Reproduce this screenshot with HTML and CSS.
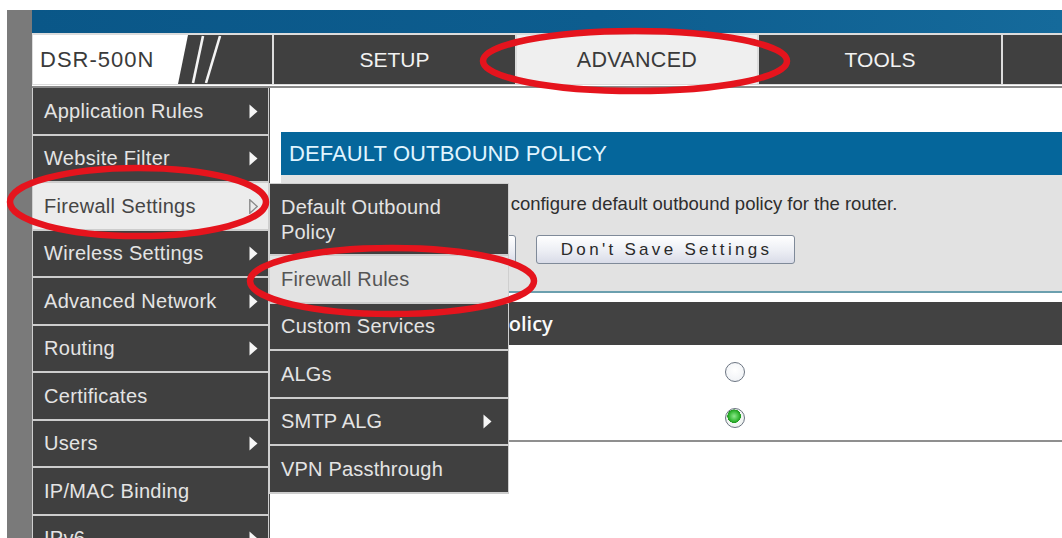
FILE: index.html
```html
<!DOCTYPE html>
<html lang="en">
<head>
<meta charset="utf-8">
<title>DSR-500N — Default Outbound Policy</title>
<link rel="stylesheet" href="styles.css">
</head>
<body>
<div class="frame">
  <div class="rail"></div>
  <div class="main">
    <div class="topbar"></div>
    <nav class="tabs">
      <div class="logo">
        <span class="logo-text">DSR-500N</span>
        <svg class="logo-mark" viewBox="0 0 100 49" width="100" height="49" aria-hidden="true">
          <polygon points="16,0 100,0 100,49 6,49" fill="#404040"/>
          <line x1="31" y1="1" x2="21" y2="48" stroke="#f4f4f4" stroke-width="2.6"/>
          <line x1="48" y1="1" x2="34" y2="48" stroke="#f4f4f4" stroke-width="2.6"/>
        </svg>
      </div>
      <div class="tab">SETUP</div>
      <div class="tab active">ADVANCED</div>
      <div class="tab">TOOLS</div>
      <div class="tab"></div>
    </nav>
    <div class="rule"></div>
    <div class="workspace">
      <ul class="sidemenu">
        <li class="item">Application Rules<svg class="arr" viewBox="0 0 9 15"><path d="M0.5 0.5 L8.5 7.5 L0.5 14.5Z"/></svg></li>
        <li class="item">Website Filter<svg class="arr" viewBox="0 0 9 15"><path d="M0.5 0.5 L8.5 7.5 L0.5 14.5Z"/></svg></li>
        <li class="item current">Firewall Settings<svg class="arr open" viewBox="0 0 9 15"><path d="M0.8 0.8 L8.2 7.5 L0.8 14.2Z"/></svg>
          <ul class="flyout">
            <li class="fly-item">Default Outbound Policy</li>
            <li class="fly-item current">Firewall Rules</li>
            <li class="fly-item">Custom Services</li>
            <li class="fly-item">ALGs</li>
            <li class="fly-item">SMTP ALG<svg class="arr" viewBox="0 0 9 15"><path d="M0.5 0.5 L8.5 7.5 L0.5 14.5Z"/></svg></li>
            <li class="fly-item">VPN Passthrough</li>
          </ul>
        </li>
        <li class="item">Wireless Settings<svg class="arr" viewBox="0 0 9 15"><path d="M0.5 0.5 L8.5 7.5 L0.5 14.5Z"/></svg></li>
        <li class="item">Advanced Network<svg class="arr" viewBox="0 0 9 15"><path d="M0.5 0.5 L8.5 7.5 L0.5 14.5Z"/></svg></li>
        <li class="item">Routing<svg class="arr" viewBox="0 0 9 15"><path d="M0.5 0.5 L8.5 7.5 L0.5 14.5Z"/></svg></li>
        <li class="item">Certificates</li>
        <li class="item">Users<svg class="arr" viewBox="0 0 9 15"><path d="M0.5 0.5 L8.5 7.5 L0.5 14.5Z"/></svg></li>
        <li class="item">IP/MAC Binding</li>
        <li class="item">IPv6<svg class="arr" viewBox="0 0 9 15"><path d="M0.5 0.5 L8.5 7.5 L0.5 14.5Z"/></svg></li>
      </ul>

      <section class="content">
        <div class="panel">
          <h2 class="panel-title">DEFAULT OUTBOUND POLICY</h2>
          <div class="panel-body">
            <p class="intro">This page allows user to configure default outbound policy for the router.</p>
            <div class="actions">
              <button class="btn" type="button">Save Settings</button>
              <button class="btn" type="button">Don't Save Settings</button>
            </div>
          </div>
        </div>

        <div class="policy">
          <div class="policy-head">Default Outbound Policy</div>
          <div class="policy-rows">
            <div class="policy-row">
              <span class="policy-label">Allow Always</span>
              <span class="radio"></span>
            </div>
            <div class="policy-row last">
              <span class="policy-label">Block Always</span>
              <span class="radio checked"></span>
            </div>
          </div>
        </div>
      </section>
    </div>
  </div>
</div>

<svg class="marks" viewBox="0 0 1062 538" width="1062" height="538" aria-hidden="true">
  <ellipse cx="635" cy="61" rx="152" ry="30" />
  <ellipse cx="138" cy="202" rx="128" ry="34" />
  <ellipse cx="392" cy="281" rx="142" ry="33" />
</svg>
</body>
</html>
```

FILE: styles.css
```css
html, body {
  margin: 0;
  height: 100%;
  overflow: hidden;
  background: #fff;
  font-family: "Liberation Sans", Arial, sans-serif;
}

.frame {
  display: flex;
  height: 528px;
  padding: 10px 0 0 7px;
}

.rail {
  flex: none;
  width: 25px;
  background: #7a7a7a;
}

.main {
  flex: 1;
  min-width: 0;
  display: flex;
  flex-direction: column;
}

/* blue strip above the tabs */
.topbar {
  flex: none;
  height: 23px;
  background: linear-gradient(90deg, #0a5788 0%, #0d5d8f 55%, #156a9b 100%);
}

/* tab row */
.tabs {
  flex: none;
  display: grid;
  grid-template-columns: 239px 241px 240px 242px 1fr;
  grid-template-rows: 49px;
  column-gap: 2px;
  padding: 2px 0 1px 1px;
  background: #dcdcdc;
}

.logo {
  display: flex;
  align-items: center;
  justify-content: space-between;
  background: #fff;
  overflow: hidden;
}

.logo-text {
  padding-left: 7px;
  font-size: 22px;
  letter-spacing: 1px;
  color: #3a3a3a;
}

.logo-mark {
  flex: none;
  display: block;
}

.tab {
  display: flex;
  align-items: center;
  justify-content: center;
  background: #404040;
  color: #f2f2f2;
  font-size: 21px;
  padding-top: 1px;
}

.tab.active {
  background: #efefef;
  color: #3a3a3a;
  font-size: 21.5px;
  letter-spacing: 0.3px;
}

.rule {
  flex: none;
  height: 2px;
  margin-top: 1px;
  background: #8a8a8a;
}

.workspace {
  flex: 1;
  display: flex;
  min-height: 0;
}

/* left menu */
.sidemenu {
  flex: none;
  width: 237px;
  margin: 0;
  padding: 0;
  list-style: none;
  border-right: 1px solid #4a4a4a;
}

.item {
  position: relative;
  box-sizing: border-box;
  height: 47.5px;
  display: flex;
  align-items: center;
  justify-content: space-between;
  padding: 1px 10px 0 11px;
  background: #404040;
  color: #e4e4e4;
  font-size: 20px;
  letter-spacing: 0.3px;
  border-left: 1px solid #cfcfcf;
  border-right: 1px solid #cfcfcf;
  border-bottom: 2px solid #cdcdcd;
}

.item.current {
  background: #ececec;
  color: #454545;
}

.arr {
  flex: none;
  width: 9px;
  height: 15px;
  fill: #f6f6f6;
}

.arr.open {
  fill: none;
  stroke: #8a8a8a;
  stroke-width: 1.4;
}

/* flyout submenu */
.flyout {
  position: absolute;
  top: 0;
  left: calc(100% + 1px);
  z-index: 5;
  width: 240px;
  margin: 0;
  padding: 0;
  list-style: none;
  box-sizing: border-box;
  border-left: 1px solid #cfcfcf;
  border-top: 1px solid #cfcfcf;
}

.fly-item {
  box-sizing: border-box;
  min-height: 47.5px;
  display: flex;
  align-items: center;
  justify-content: space-between;
  padding: 1px 16px 0 11px;
  background: #404040;
  color: #e4e4e4;
  font-size: 20px;
  letter-spacing: 0.2px;
  line-height: 25px;
  border-bottom: 2px solid #cdcdcd;
  border-right: 1px solid #cfcfcf;
}

.fly-item:first-child {
  min-height: 72px;
  padding-right: 40px;
}

.fly-item.current {
  background: #e3e3e3;
  color: #555;
}

/* main content */
.content {
  flex: 1;
  min-width: 0;
  padding: 44px 0 0 11px;
}

.panel {
  border-bottom: 2px solid #6b9fae;
}

.panel-title {
  margin: 0;
  height: 43px;
  padding-left: 8px;
  background: #05669b;
  color: #e0f5ff;
  font-size: 22px;
  font-weight: normal;
  line-height: 43px;
  letter-spacing: 0.1px;
}

.panel-body {
  box-sizing: border-box;
  height: 116px;
  padding: 18px 0 0 8px;
  background: #e2e2e2;
  color: #2e2e2e;
}

.intro {
  margin: 0;
  font-size: 18.5px;
  line-height: 21px;
  white-space: nowrap;
  padding-left: 17px;
}

.actions {
  display: flex;
  gap: 20px;
  margin-top: 21px;
  padding-left: 31px;
}

.btn {
  height: 29px;
  padding: 0 22px 0 24px;
  border: 1px solid #7f8a99;
  border-radius: 3px;
  background: linear-gradient(#ffffff, #eceef4 55%, #d9dce8);
  color: #2a2a2a;
  font-family: "Liberation Sans", Arial, sans-serif;
  font-size: 17px;
  letter-spacing: 3.3px;
}

.policy {
  margin-top: 9px;
}

.policy-head {
  height: 43px;
  padding-left: 35px;
  background: #424242;
  color: #fafafa;
  font-family: "Open Sans", "Liberation Sans", sans-serif;
  font-weight: 600;
  font-size: 20px;
  line-height: 43px;
}

.policy-rows {
  padding-top: 3px;
}

.policy-row {
  display: grid;
  grid-template-columns: 444px 20px 1fr;
  align-items: center;
  height: 47px;
}

.policy-row.last {
  height: 45px;
  border-bottom: 2px solid #8f8f8f;
}

.policy-label {
  padding-left: 10px;
  font-size: 18px;
  color: #333;
}

.radio {
  box-sizing: border-box;
  width: 20px;
  height: 20px;
  border-radius: 50%;
  border: 1.6px solid #6c7582;
  background: radial-gradient(circle at 50% 40%, #ffffff 0%, #f2f4f7 70%, #dde2e8 100%);
}

.radio.checked {
  background:
    radial-gradient(circle at 45% 40%, #8ee88e 0%, #3fbf3f 30%, #1f9a1f 45%, transparent 47%),
    radial-gradient(circle, #ffffff 0%, #eef2f0 70%, #d8e0dc 100%);
}

/* red hand-drawn rings */
.marks {
  position: absolute;
  top: 0;
  left: 0;
  z-index: 10;
  pointer-events: none;
  fill: none;
  stroke: #e5141d;
  stroke-width: 6.5;
}
```
